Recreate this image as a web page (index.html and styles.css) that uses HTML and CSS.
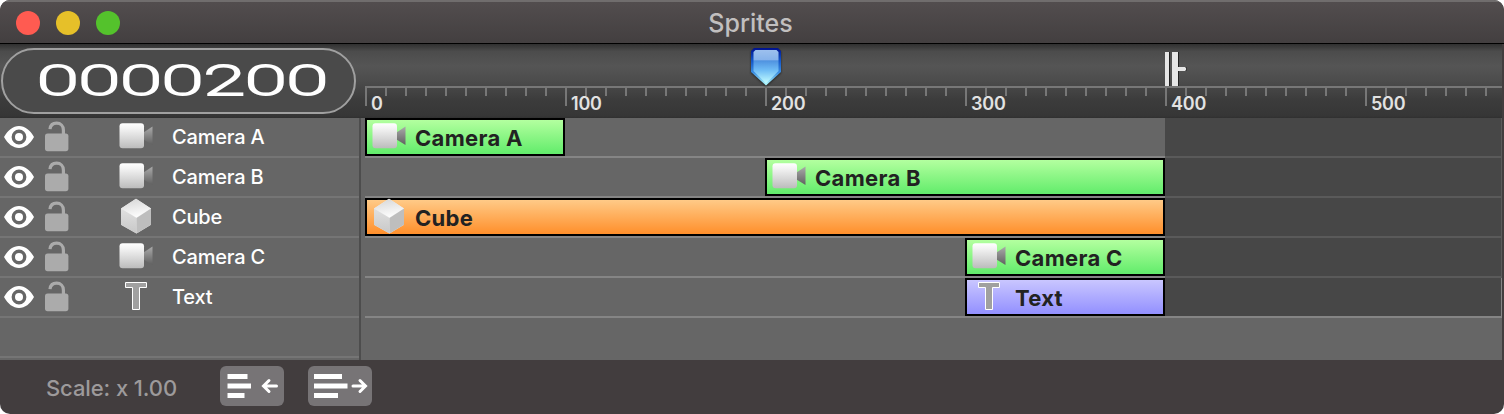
FILE: index.html
```
<!DOCTYPE html>
<html lang="en">
<head>
  <meta charset="UTF-8">
  <title>Sprites</title>
  <link rel="stylesheet" href="styles.css">
</head>
<body>
  <svg class="defs" width="0" height="0">
    <defs>
      <linearGradient id="boxFill" x1="0" y1="0" x2="0" y2="1">
        <stop offset="0" stop-color="#fff"/>
        <stop offset="0.2" stop-color="#f4f4f4"/>
        <stop offset="1" stop-color="#bcbcbc"/>
      </linearGradient>
      <linearGradient id="lensFill" x1="0" y1="0" x2="0" y2="1">
        <stop offset="0" stop-color="#aaa"/>
        <stop offset="1" stop-color="#606060"/>
      </linearGradient>
      <linearGradient id="cubeTop" x1="0.3" y1="0" x2="0.6" y2="1">
        <stop offset="0" stop-color="#d8d8d8"/>
        <stop offset="1" stop-color="#fff"/>
      </linearGradient>
      <linearGradient id="cubeSide" x1="0" y1="0" x2="0" y2="1">
        <stop offset="0" stop-color="#e0e0e0"/>
        <stop offset="1" stop-color="#c8c8c8"/>
      </linearGradient>
      <linearGradient id="headFill" x1="0" y1="0" x2="0" y2="1">
        <stop offset="0" stop-color="#9dc0ee"/>
        <stop offset="0.3" stop-color="#86b2ea"/>
        <stop offset="0.32" stop-color="#4f92e0"/>
        <stop offset="0.6" stop-color="#6fbcf5"/>
        <stop offset="1" stop-color="#c5ffff"/>
      </linearGradient>
      <linearGradient id="headEdge" x1="0" y1="0" x2="0" y2="1">
        <stop offset="0" stop-color="#00108c"/>
        <stop offset="0.3" stop-color="#0f4fc4"/>
        <stop offset="0.65" stop-color="#3a8ce0"/>
        <stop offset="1" stop-color="#b5ffff"/>
      </linearGradient>
    </defs>
    <symbol id="eye" viewBox="0 0 30 24">
      <path fill="#fff" fill-rule="evenodd" d="M0 12C4 5 9 1 15 1s11 4 15 11c-4 7-9 11-15 11S4 19 0 12zM15 4.6a7.4 7.4 0 1 0 0 14.8 7.4 7.4 0 0 0 0-14.8z"/>
      <circle cx="15" cy="12" r="4" fill="#fff"/>
    </symbol>
    <symbol id="lock" viewBox="0 0 24 31">
      <rect x="0" y="12.6" width="23.4" height="17.6" rx="2.6" fill="#ababab"/>
      <path d="M5 8.2C5.4 4.5 8 2.2 11.6 2.2c4 0 6.8 2.6 6.8 6.8v5" fill="none" stroke="#ababab" stroke-width="3.2"/>
    </symbol>
    <symbol id="camera" viewBox="0 0 34 36">
      <path d="M24.5 14.5L33.5 8.5v18.5l-9-5.500z" fill="url(#lensFill)"/>
      <rect x="0.500" y="5.200" width="24.500" height="25" rx="3" fill="url(#boxFill)"/>
    </symbol>
    <symbol id="cube" viewBox="0 0 34 36">
      <path d="M17 0.8L32 10.5v16.2L17.5 35.4 2 26.7V10.5z" fill="#eee"/>
      <path d="M17 0.8L32 10.5 17.5 19.5 2 10.5z" fill="url(#cubeTop)"/>
      <path d="M2 10.5l15.5 9.500v15.400L2 26.7z" fill="url(#cubeSide)"/>
      <path d="M32 10.5l-14.5 9.500v15.400L32 26.7z" fill="#bebebe"/>
    </symbol>
    <symbol id="text" viewBox="0 0 34 36">
      <path d="M6.5 4.500h21v5H20.500v22H13.500v-22H6.500z" fill="#a0a0a0" stroke="#fff"/>
    </symbol>
  </svg>

  <div class="window">
    <header class="titlebar">
      <div class="lights">
        <span class="light red"></span>
        <span class="light yellow"></span>
        <span class="light green"></span>
      </div>
      <h1 class="title">Sprites</h1>
    </header>

    <div class="top">
      <div class="counter"><span class="digits">0000200</span></div>
      <div class="ruler">
        <div class="ticks">
          <span>0</span><span>100</span><span>200</span><span>300</span><span>400</span><span>500</span>
        </div>
        <svg class="playhead" width="34" height="40" viewBox="0 0 34 40">
          <path d="M5 1h24l3 3v21L17 38.500 2 25V4z" fill="url(#headEdge)"/>
          <path d="M6.500 3h21l2 2v19L17 36.500 4.500 24V5z" fill="url(#headFill)"/>
        </svg>
        <svg class="end-marker" width="23" height="34" viewBox="0 0 23 34">
          <path d="M1 0h4v34H1zM8 0h6v15h7.500v4H14v15H8z" fill="#222"/>
          <path d="M0 0h4v34H0zM7 0h6v15h7l1 1v2l-1 1h-7v15H7z" fill="#e6e6e6"/>
        </svg>
      </div>
    </div>

    <main class="body">
      <div class="list">
        <div class="item"><svg class="eye"><use href="#eye"/></svg><svg class="lock"><use href="#lock"/></svg><svg class="icon"><use href="#camera"/></svg><span class="name">Camera A</span></div>
        <div class="item"><svg class="eye"><use href="#eye"/></svg><svg class="lock"><use href="#lock"/></svg><svg class="icon"><use href="#camera"/></svg><span class="name">Camera B</span></div>
        <div class="item"><svg class="eye"><use href="#eye"/></svg><svg class="lock"><use href="#lock"/></svg><svg class="icon"><use href="#cube"/></svg><span class="name">Cube</span></div>
        <div class="item"><svg class="eye"><use href="#eye"/></svg><svg class="lock"><use href="#lock"/></svg><svg class="icon"><use href="#camera"/></svg><span class="name">Camera C</span></div>
        <div class="item"><svg class="eye"><use href="#eye"/></svg><svg class="lock"><use href="#lock"/></svg><svg class="icon"><use href="#text"/></svg><span class="name">Text</span></div>
        <div class="item"></div>
      </div>
      <div class="tracks">
        <div class="track"><div class="clip green from-0 to-100"><svg class="icon"><use href="#camera"/></svg><span>Camera A</span></div></div>
        <div class="track"><div class="clip green from-200 to-400"><svg class="icon"><use href="#camera"/></svg><span>Camera B</span></div></div>
        <div class="track"><div class="clip orange from-0 to-400"><svg class="icon"><use href="#cube"/></svg><span>Cube</span></div></div>
        <div class="track"><div class="clip green from-300 to-400"><svg class="icon"><use href="#camera"/></svg><span>Camera C</span></div></div>
        <div class="track last"><div class="clip purple from-300 to-400"><svg class="icon"><use href="#text"/></svg><span>Text</span></div></div>
      </div>
    </main>

    <footer class="footer">
      <span class="scale">Scale: x 1.00</span>
      <button class="btn" aria-label="Zoom out">
        <svg width="64" height="40" viewBox="0 0 64 40">
          <path d="M7.500 8h20v5h-20zM7.500 17.500h23.500v5H7.500zM7.500 27h17v5h-17z" fill="#fff"/>
          <path d="M56.500 20H44.500M49 14.500L43.500 20l5.500 5.500" fill="none" stroke="#fff" stroke-width="3" stroke-linecap="round"/>
        </svg>
      </button>
      <button class="btn" aria-label="Zoom in">
        <svg width="64" height="40" viewBox="0 0 64 40">
          <path d="M6 8h28v5H6zM6 17.500h33.500v5H6zM6 27h24v5H6z" fill="#fff"/>
          <path d="M45 20h12M52 14.500l5.500 5.500-5.500 5.500" fill="none" stroke="#fff" stroke-width="3" stroke-linecap="round"/>
        </svg>
      </button>
    </footer>
  </div>
</body>
</html>
```
FILE: styles.css
```
* {
  box-sizing: border-box;
}

body {
  margin: 0;
  background: #fff;
  font-family: Inter, "Liberation Sans", sans-serif;
}

.defs {
  position: absolute;
}

.window {
  width: 1504px;
  height: 414px;
  border-radius: 10px;
  overflow: hidden;
  background: #423d3e;
}

.titlebar {
  height: 44px;
  display: grid;
  grid-template-columns: 1fr auto 1fr;
  align-items: center;
  background: linear-gradient(#524d4e, #433f40);
  border-top: 2px solid #706d6d;
  border-bottom: 1px solid #000;
}

.lights {
  display: flex;
  gap: 16px;
  padding-left: 16px;
}

.light {
  width: 24px;
  height: 24px;
  border-radius: 50%;
}

.red { background: #ff5b51; }
.yellow { background: #e6c029; }
.light.green { background: #54c22c; }

.title {
  margin: 0 3px 0 0;
  font-size: 25px;
  font-weight: 450;
  line-height: 40px;
  color: #c1bfbf;
}

.top {
  height: 74px;
  width: 1502px;
  display: flex;
  overflow: hidden;
  background: linear-gradient(#303030, #4c4c4c 10%, #555 30%, #4c4c4c 50%, #3c3c3c 75%, #363636 97%, #303030);
}

.counter {
  flex: none;
  width: 355px;
  height: 66px;
  margin: 4px 9px 0 1px;
  border: 2px solid #a0a0a0;
  border-radius: 33px;
  background: #4a4a4a;
}

.digits {
  display: block;
  width: 170px;
  margin-left: 34px;
  font-family: Roboto, sans-serif;
  font-weight: 200;
  font-size: 42px;
  line-height: 62px;
  color: #fff;
  -webkit-text-stroke: 1.8px #fff;
  transform: scaleX(1.8);
  transform-origin: 0 50%;
}

.ruler {
  position: relative;
  flex: 1;
  min-width: 0;
  padding-top: 42px;
}

/* one unit is 2px, small ticks every 10 units */
.ticks {
  height: 20px;
  display: grid;
  grid-template-columns: repeat(6, 200px);
  border-top: 2px solid #777;
  background:
    repeating-linear-gradient(90deg, #777 0 2px, transparent 2px 200px) 0 0 / 100% 18px no-repeat,
    repeating-linear-gradient(90deg, #777 0 2px, transparent 2px 20px) 0 0 / 100% 8px no-repeat;
}

.ticks span {
  padding: 5px 0 0 6px;
  font-size: 18px;
  font-weight: 600;
  line-height: 22px;
  letter-spacing: -0.2px;
  color: #e2e2e2;
}

.playhead {
  position: absolute;
  left: 384px;
  top: 3px;
  filter: drop-shadow(0 1px 1px #222);
}

.end-marker {
  position: absolute;
  left: 800px;
  top: 8px;
}

.body {
  height: 242px;
  width: 1502px;
  display: flex;
  background: #666;
}

.list {
  width: 361px;
  border-right: 2px solid #4d4d4d;
}

.item {
  height: 40px;
  display: flex;
  border-bottom: 2px solid #757575;
}

.eye {
  width: 30px;
  height: 24px;
  margin: 7px 11px 0 4px;
}

.lock {
  width: 24px;
  height: 31px;
  margin: 3px 50px 0 0;
}

.icon {
  width: 34px;
  height: 36px;
}

.name {
  margin-left: 19px;
  font-size: 20px;
  font-weight: 550;
  line-height: 38px;
  letter-spacing: -0.2px;
  color: #fff;
}

.tracks {
  width: 1137px;
  margin-left: 4px;
}

.track {
  height: 40px;
  display: grid;
  grid-template-columns: repeat(4, 200px) 1fr;
  border-bottom: 2px solid #858585;
  border-right: 1px solid #646464;
  border-image: linear-gradient(90deg, #858585 800px, #5a5a5a 800px) 2;
  border-image-width: 0 1px 2px 0;
  background: linear-gradient(90deg, transparent 800px, #474747 800px);
}

.last {
  border-image: linear-gradient(#858585, #858585) 2;
  border-image-width: 0 1px 2px 0;
}

.from-0 { grid-column-start: 1; }
.from-200 { grid-column-start: 3; }
.from-300 { grid-column-start: 4; }
.to-100 { grid-column-end: 2; }
.to-400 { grid-column-end: 5; }

.clip {
  height: 38px;
  display: flex;
  border: 2px solid #000;
  color: #222;
  font-size: 22px;
  font-weight: 700;
  line-height: 36px;
  letter-spacing: 0.3px;
}

.clip .icon {
  margin: -2px 9px 0 5px;
}

.clip.green { background: linear-gradient(#b3ff9f, #62ec6b); }
.clip.orange { background: linear-gradient(#ffca87, #ff8f2b); }
.clip.purple { background: linear-gradient(#c9c6ff, #9390ff); }

.footer {
  height: 54px;
  display: flex;
  align-items: flex-start;
  padding: 6px 0 0 46px;
}

.scale {
  width: 174px;
  font-size: 22px;
  font-weight: 450;
  line-height: 44px;
  letter-spacing: -0.1px;
  color: #9d9a9b;
}

.btn {
  width: 64px;
  height: 40px;
  margin: 0 24px 0 0;
  padding: 0;
  border: 0;
  border-radius: 6px;
  background: #777476;
}

.btn svg {
  display: block;
}
```
